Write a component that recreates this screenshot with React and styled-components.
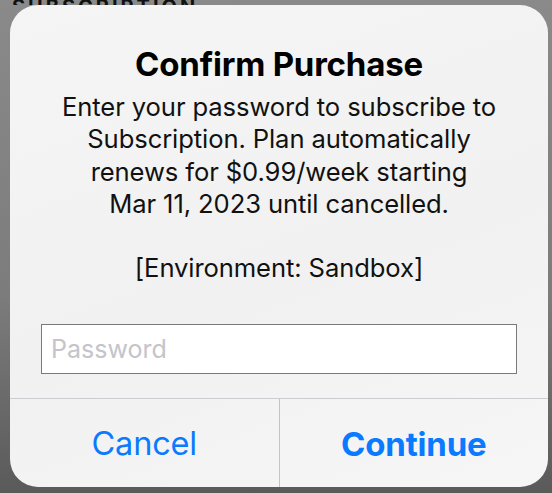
import React from "react";
import styled, { createGlobalStyle } from "styled-components";

const Global = createGlobalStyle`
  html, body { margin: 0; padding: 0; }
  body {
    width: 552px;
    height: 493px;
    overflow: hidden;
    font-family: Inter, "Noto Sans", "Liberation Sans", sans-serif;
    -webkit-font-smoothing: antialiased;
  }
`;

const Screen = styled.div`
  width: 552px;
  height: 493px;
  box-sizing: border-box;
  display: flex;
  flex-direction: column;
  background: linear-gradient(180deg, #8a8a8a 0%, #7c7c7c 60%, #5a5a5a 100%);
  padding: 0 4px 6px 10px;
`;

const BackdropStrip = styled.div`
  height: 5px;
  overflow: hidden;
  display: flex;
  align-items: flex-end;
  padding-left: 12px;
  margin-left: -10px;
`;

const BackdropText = styled.span`
  font-size: 20px;
  font-weight: 700;
  letter-spacing: 3px;
  color: #111;
  line-height: 20px;
  margin-bottom: -12px;
`;

const Alert = styled.div`
  flex: 1;
  display: flex;
  flex-direction: column;
  background: linear-gradient(160deg, #f5f5f5 0%, #f1f1f1 55%, #f6f6f6 100%);
  border-radius: 28px;
  overflow: hidden;
`;

const Content = styled.div`
  display: flex;
  flex-direction: column;
  align-items: center;
  padding: 40px 31px 24px 31px;
`;

const Title = styled.h1`
  margin: 0;
  font-size: 33px;
  font-weight: 700;
  line-height: 38px;
  color: #000;
  letter-spacing: -0.2px;
`;

const Message = styled.p`
  margin: 8px 0 0;
  font-size: 25.6px;
  font-weight: 400;
  line-height: 32.3px;
  color: #111;
  text-align: center;
  letter-spacing: -0.1px;
  white-space: nowrap;
`;

const Field = styled.input`
  margin-top: 39px;
  align-self: stretch;
  height: 50px;
  box-sizing: border-box;
  border: 1px solid #7a7a7a;
  background: #fff;
  padding: 0 9px;
  font-family: inherit;
  font-size: 25px;
  color: #000;
  outline: none;
  &::placeholder { color: #c4c4ca; }
`;

const Actions = styled.div`
  flex: 1;
  display: grid;
  grid-template-columns: 1fr 1px 1fr;
  border-top: 1px solid #cbcbd0;
`;

const Divider = styled.div`
  background: #c4c4c8;
`;

const ActionButton = styled.button`
  border: none;
  background: transparent;
  font-family: inherit;
  font-size: ${(p) => (p.$primary ? "33px" : "32.5px")};
  font-weight: ${(p) => (p.$primary ? 700 : 400)};
  color: #0a7aff;
  display: flex;
  align-items: center;
  justify-content: center;
  padding: 2px 0 0;
  letter-spacing: -0.2px;
`;

export default function App() {
  return (
    <>
      <Global />
      <Screen>
        <BackdropStrip>
          <BackdropText>SUBSCRIPTION</BackdropText>
        </BackdropStrip>
        <Alert>
          <Content>
            <Title>Confirm Purchase</Title>
            <Message>
              Enter your password to subscribe to
              <br />
              Subscription. Plan automatically
              <br />
              renews for $0.99/week starting
              <br />
              Mar 11, 2023 until cancelled.
              <br />
              <br />
              [Environment: Sandbox]
            </Message>
            <Field type="password" placeholder="Password" />
          </Content>
          <Actions>
            <ActionButton>Cancel</ActionButton>
            <Divider />
            <ActionButton $primary>Continue</ActionButton>
          </Actions>
        </Alert>
      </Screen>
    </>
  );
}
